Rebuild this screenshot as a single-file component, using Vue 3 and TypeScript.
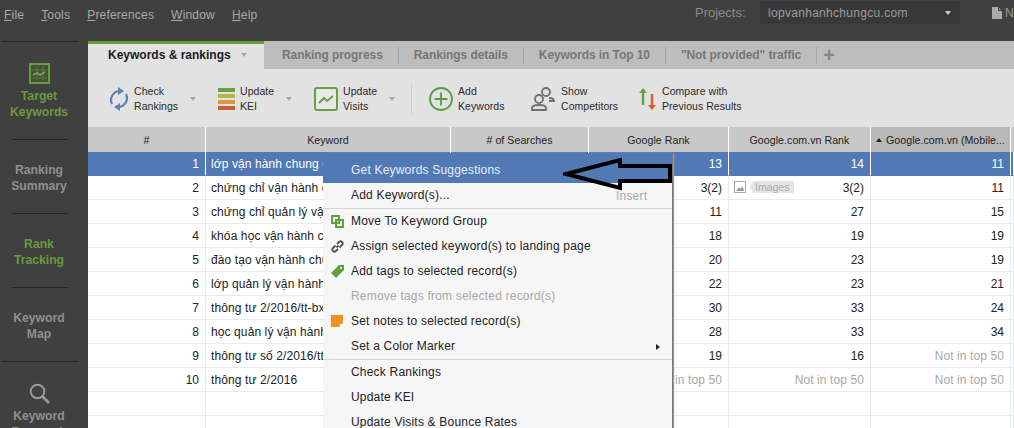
<script setup lang="ts">
interface Row { n: number; kw: string; g: string; v: string; m: string }
const na = 'Not in top 50'
const rows: Row[] = [
  { n: 1, kw: 'lớp vận hành chung cư', g: '13', v: '14', m: '11' },
  { n: 2, kw: 'chứng chỉ vận hành chung cư', g: '3(2)', v: '3(2)', m: '11' },
  { n: 3, kw: 'chứng chỉ quản lý vận hành chung cư', g: '11', v: '27', m: '15' },
  { n: 4, kw: 'khóa học vận hành chung cư', g: '18', v: '19', m: '19' },
  { n: 5, kw: 'đào tạo vận hành chung cư', g: '20', v: '23', m: '19' },
  { n: 6, kw: 'lớp quản lý vận hành chung cư', g: '22', v: '23', m: '21' },
  { n: 7, kw: 'thông tư 2/2016/tt-bxd', g: '30', v: '33', m: '24' },
  { n: 8, kw: 'học quản lý vận hành chung cư', g: '28', v: '33', m: '34' },
  { n: 9, kw: 'thông tư số 2/2016/tt-bxd', g: '19', v: '16', m: na },
  { n: 10, kw: 'thông tư 2/2016', g: na, v: na, m: na },
]
const menuA = ['Move To Keyword Group', 'Assign selected keyword(s) to landing page', 'Add tags to selected record(s)', 'Remove tags from selected record(s)', 'Set notes to selected record(s)', 'Set a Color Marker']
const menuB = ['Check Rankings', 'Update KEI', 'Update Visits & Bounce Rates']
const tabs = ['Ranking progress', 'Rankings details', 'Keywords in Top 10', '"Not provided" traffic']
</script>

<template>
  <div class="app">
    <header class="top">
      <nav class="menubar">
        <span><u>F</u>ile</span><span><u>T</u>ools</span><span><u>P</u>references</span><span><u>W</u>indow</span><span><u>H</u>elp</span>
      </nav>
      <div class="projects">
        <span class="plabel">Projects:</span>
        <div class="select"><span>lopvanhanhchungcu.com</span><i class="caret light"></i></div>
        <svg class="file" width="10" height="12" viewBox="0 0 10 12"><path d="M0 0h6l4 4v8H0z" fill="#aaa"/><path d="M6.500 0v3.500H10" fill="none" stroke="#404040"/></svg>
        <span class="new">New</span>
      </div>
    </header>
    <div class="body">
      <aside class="side">
        <div class="sline wide-line"></div>
        <div class="sitem first active">
          <svg width="21" height="21" viewBox="0 0 21 21" fill="none"><rect x="1" y="1" width="19" height="19" fill="#45503a" stroke="#6a9a3c" stroke-width="2"/><path d="M3 7h15M3 15h15M8 3v15M14 3v15" stroke="#6a9a3c" stroke-width=".8" opacity=".7"/><path d="M4 12l4-2 3 2 5-3" stroke="#7aa84a" stroke-width="1.600"/></svg>
          <span>Target<br>Keywords</span>
        </div>
        <div class="sline"></div>
        <div class="sitem"><span>Ranking<br>Summary</span></div>
        <div class="sline"></div>
        <div class="sitem active"><span>Rank<br>Tracking</span></div>
        <div class="sline"></div>
        <div class="sitem"><span>Keyword<br>Map</span></div>
        <div class="sline wide-line"></div>
        <div class="sitem first">
          <svg width="21" height="21" viewBox="0 0 21 21" fill="none"><circle cx="8.500" cy="8.500" r="6.800" stroke="#9a9a9a" stroke-width="2"/><path d="M13.500 13.500l6.500 6.500" stroke="#9a9a9a" stroke-width="2.600"/></svg>
          <span>Keyword<br>Research</span>
        </div>
      </aside>
      <main class="main">
        <div class="tabs">
          <div class="tab current">Keywords &amp; rankings<i class="caret"></i></div>
          <div v-for="t in tabs" :key="t" class="tab">{{ t }}</div>
          <div class="plus">+</div>
        </div>
        <div class="toolbar">
          <div class="tool t-check">
            <svg width="22" height="24" viewBox="0 0 22 24" fill="none"><path d="M4 17A9 9 0 0 1 11 4" stroke="#5c84b8" stroke-width="2.200"/><path d="M18 7a9 9 0 0 1-7 13" stroke="#5c84b8" stroke-width="2.200"/><path d="M10 0l6 4-6 4z" fill="#5c84b8"/><path d="M12 16l-6 4 6 4z" fill="#5c84b8"/></svg>
            <span>Check<br>Rankings</span><i class="caret"></i>
          </div>
          <div class="tool t-kei">
            <div class="kei"><b class="k1"></b><b class="k2"></b><b class="k3"></b><b class="k4"></b></div>
            <span>Update<br>KEI</span><i class="caret"></i>
          </div>
          <div class="tool t-visits">
            <svg width="24" height="24" viewBox="0 0 24 24" fill="none"><rect x="1" y="1" width="22" height="22" rx="2" stroke="#6a9f45" stroke-width="2" fill="#e8e8e8"/><path d="M5 16l5-5 3 3 6-5" stroke="#6a9f45" stroke-width="2"/></svg>
            <span>Update<br>Visits</span><i class="caret"></i>
          </div>
          <div class="vsep"></div>
          <div class="tool t-add">
            <svg width="24" height="24" viewBox="0 0 24 24" fill="none"><circle cx="12" cy="12" r="11" stroke="#5f9a42" stroke-width="1.800"/><path d="M12 5.500v13M5.500 12h13" stroke="#5f9a42" stroke-width="1.800"/></svg>
            <span>Add<br>Keywords</span>
          </div>
          <div class="tool t-show">
            <svg width="25" height="24" viewBox="0 0 25 24" fill="none" stroke="#707070" stroke-width="1.800"><circle cx="15" cy="5" r="4"/><circle cx="8" cy="12" r="4"/><path d="M18 11c3 0 5 1 5 3h-5M1 23v-2c0-2 3-3 7-3s7 1 7 3v2z"/></svg>
            <span>Show<br>Competitors</span>
          </div>
          <div class="tool t-cmp">
            <svg width="17" height="24" viewBox="0 0 17 24" fill="none"><path d="M4 18V3" stroke="#63a043" stroke-width="2.400"/><path d="M0 6l4-5 4 5z" fill="#63a043"/><path d="M13 7v13" stroke="#d2602f" stroke-width="2.400"/><path d="M9 18l4 5 4-5z" fill="#d2602f"/></svg>
            <span>Compare with<br>Previous Results</span>
          </div>
        </div>
        <div class="grid head">
          <div class="hc">#</div><div class="hc">Keyword</div><div class="hc"># of Searches</div><div class="hc">Google Rank</div><div class="hc">Google.com.vn Rank</div>
          <div class="hc sorted"><i class="up"></i>Google.com.vn (Mobile...</div><div class="hc end"></div>
        </div>
        <div v-for="r in rows" :key="r.n" class="grid row" :class="{ sel: r.n === 1 }">
          <div class="c num">{{ r.n }}</div>
          <div class="c kw">{{ r.kw }}</div>
          <div class="c"></div>
          <div class="c num" :class="{ na: r.g === na }">{{ r.g }}</div>
          <div class="c num vn" :class="{ na: r.v === na }">
            <span v-if="r.n === 2" class="img">
              <svg width="12" height="12" viewBox="0 0 12 12"><rect x=".5" y=".5" width="11" height="11" fill="#fff" stroke="#aaa"/><path d="M2 10l3-4 1.500 2 2-3 1.500 5z" fill="#999"/></svg>
              <em>Images</em>
            </span>
            {{ r.v }}
          </div>
          <div class="c num" :class="{ na: r.m === na }">{{ r.m }}</div>
          <div class="c"></div>
        </div>
        <div v-for="n in 2" :key="n" class="grid row">
          <div class="c"></div><div class="c"></div><div class="c"></div><div class="c"></div><div class="c"></div><div class="c"></div><div class="c"></div>
        </div>
      </main>
    </div>

    <div class="menu">
      <div class="mi hi">Get Keywords Suggestions</div>
      <div class="mi">Add Keyword(s)...<span class="short">Insert</span></div>
      <div class="msep"></div>
      <div v-for="(m, i) in menuA" :key="m" class="mi" :class="{ dis: i === 3 }">
        <svg v-if="i === 0" class="mic" width="13" height="13" viewBox="0 0 13 13" fill="none" stroke="#62a13c" stroke-width="2"><rect x="1" y="1" width="7" height="7"/><rect x="5" y="5" width="7" height="7"/></svg>
        <svg v-if="i === 1" class="mic" width="13" height="13" viewBox="0 0 13 13" fill="none" stroke="#555" stroke-width="1.800"><path d="M5.500 7.500l2-2M4.500 5.500L2 8a2 2 0 0 0 3 3l2-2M8.500 7.500L11 5a2 2 0 0 0-3-3L6 4"/></svg>
        <svg v-if="i === 2" class="mic" width="13" height="13" viewBox="0 0 13 13"><path d="M0 8l8-8h5v5l-8 8z" fill="#62a13c"/><circle cx="10" cy="3" r="1" fill="#f5f5f5"/></svg>
        <svg v-if="i === 4" class="mic" width="12" height="12" viewBox="0 0 12 12"><path d="M0 0h12v8l-4 4H0z" fill="#ee9322"/><path d="M9 9h3l-3 3z" fill="#fff"/></svg>
        {{ m }}
        <i v-if="i === 5" class="sub"></i>
      </div>
      <div class="msep"></div>
      <div v-for="m in menuB" :key="m" class="mi">{{ m }}</div>
    </div>

    <svg class="arrow" width="112" height="34" viewBox="0 0 112 34" fill="none"><path d="M3 17L57 3v6h50v15H57v7z" stroke="#000" stroke-width="4" stroke-linejoin="miter"/></svg>
  </div>
</template>

<style>
html, body { margin: 0; background: #404040; }
</style>

<style scoped>
.app { position: relative; width: 1014px; height: 428px; overflow: hidden; background: #404040; font: 12px "Liberation Sans", Arial, sans-serif; color: #222; }
.top { height: 41px; display: flex; justify-content: space-between; color: #a8a8a8; }
.menubar { display: flex; gap: 17px; padding: 8px 0 0 4px; letter-spacing: .2px; line-height: 14px; }
.projects { display: flex; align-items: flex-start; width: 319px; flex: none; color: #999; overflow: hidden; white-space: nowrap; }
.plabel { width: 65px; padding-top: 5px; color: #8a8a8a; font-size: 13px; flex: none; }
.select { width: 193px; height: 23px; margin-top: 1px; padding-left: 7px; background: #383838; display: flex; align-items: center; justify-content: space-between; flex: none; letter-spacing: .3px; color: #9c9c9c; }
.select span { margin-left: 1px; }
.select .caret { margin-right: 9px; }
.file { margin: 7px 3px 0 32px; flex: none; }
.new { padding-top: 6px; }
.body { display: flex; height: 387px; }
.side { width: 88px; flex: none; overflow: hidden; font-weight: bold; color: #8f8f8f; text-align: center; line-height: 16px; font-size: 12.200px; }
.sline { height: 1px; width: 56px; margin-left: 12px; background: #262626; }
.sline.wide-line { width: 76px; margin-left: 2px; }
.sitem { width: 78px; height: 73px; padding-top: 3px; box-sizing: border-box; display: flex; flex-direction: column; align-items: center; justify-content: center; white-space: nowrap; }
.sitem.first { height: 97px; padding-top: 21px; justify-content: flex-start; gap: 4px; }
.sitem.active { color: #6a9a3c; }
.main { flex: 1; min-width: 0; display: flex; flex-direction: column; background: #fff; overflow: hidden; }
.tabs { height: 28px; flex: none; background: #bdbdbd; display: flex; color: #777; font-weight: bold; line-height: 28px; }
.tab { position: relative; padding: 0 15px 0 16px; white-space: nowrap; letter-spacing: -.08px; }
.tab:not(.current):not(:nth-child(2))::before, .plus::before { content: ""; position: absolute; left: 0; top: 6px; height: 17px; width: 1px; background: #a5a5a5; }
.tab:nth-child(2) { padding-left: 18px; padding-right: 15px; }
.tab.current { width: 176px; box-sizing: border-box; padding: 0 0 0 20px; background: #e2e2e2; border-top: 3px solid #6a9a3c; color: #1c1c1c; line-height: 22px; letter-spacing: 0; }
.tab.current .caret { margin-left: 10px; vertical-align: 2px; border-top-color: #aaa; }
.plus { position: relative; padding-left: 7px; font-size: 20px; font-weight: bold; color: #888; line-height: 28px; }
.toolbar { height: 58px; flex: none; box-sizing: border-box; padding: 1px 0 0 20px; background: #e2e2e2; display: flex; align-items: center; line-height: 15px; font-size: 10.500px; letter-spacing: .05px; color: #2a2a2a; white-space: nowrap; }
.tool { display: flex; align-items: center; flex: none; }
.tool svg, .kei { flex: none; margin-right: 5px; }
.caret { display: inline-block; width: 0; height: 0; border: 3px solid transparent; border-top: 4px solid #aaa; border-bottom: 0; }
.caret.light { border-top-color: #ccc; }
.tool .caret { margin-left: auto; border-top-color: #aaa; }
.t-check { width: 110px; }
.t-check svg { margin-right: 4px; }
.t-kei { width: 96px; }
.t-visits { width: 81px; }
.t-kei .caret, .t-check .caret { margin-right: 22px; }
.t-visits .caret { margin-right: 0; }
.vsep { width: 1px; height: 32px; background: #cfcfcf; margin: 0 17px 0 16px; flex: none; }
.t-add { width: 102px; }
.t-show { width: 108px; }
.t-cmp svg { margin-right: 6px; }
.kei { width: 17px; display: flex; flex-direction: column; gap: 2px; }
.kei b { height: 4px; display: block; }
.k1 { background: #6a9f45; } .k2 { background: #b3b54a; } .k3 { background: #dd9a3c; } .k4 { background: #c4623a; }
.grid { display: grid; grid-template-columns: 118px 245px 138px 140px 142px 140px 3px; }
.head { height: 25px; line-height: 27px; text-align: center; color: #222; flex: none; font-size: 10.600px; letter-spacing: .05px; }
.hc { background: #c8c8c8; border-right: 1px solid #fff; white-space: nowrap; overflow: hidden; }
.hc.end { border: 0; }
.hc.sorted { background: #b8b8b8; }
.up { display: inline-block; width: 0; height: 0; border: 3px solid transparent; border-bottom: 4px solid #222; border-top: 0; margin-right: 4px; vertical-align: 2px; }
.row { height: 24px; line-height: 25px; flex: none; color: #222; }
.sel { line-height: 24px; }
.c { border-right: 1px solid #e6ebee; border-bottom: 1px solid #e6ebee; white-space: nowrap; overflow: hidden; padding: 0 6px; box-sizing: border-box; }
.c:last-child { padding: 0; }
.num { text-align: right; }
.kw { padding-left: 5px; letter-spacing: .1px; }
.na { color: #a8a8a8; letter-spacing: .1px; }
.vn { position: relative; }
.img { position: absolute; left: 5px; top: 5px; display: flex; gap: 4px; align-items: center; height: 12px; font-size: 10.500px; color: #aaa; }
.img em { font-style: normal; background: #e5e5e5; padding: 0 5px 0 5px; line-height: 12px; clip-path: polygon(3px 0, 100% 0, 100% 100%, 3px 100%, 0 50%); }
.sel { color: #fff; }
.sel .c { background: #5079b5; border-right-color: #fff; border-bottom-color: #5079b5; }
.menu { position: absolute; left: 323px; top: 153px; width: 349px; background: #f6f6f6; border-right: 1px solid #777; box-shadow: 1px 0 1px #999; color: #222; letter-spacing: .2px; }
.mi { position: relative; height: 25px; line-height: 25px; padding-left: 28px; white-space: nowrap; }
.mi.hi { height: 30px; line-height: 34px; background: #5079b5; color: #e8eef8; }
.dis { color: #a8a8a8; }
.short { position: absolute; left: 293px; top: 1px; color: #a8a8a8; }
.msep { height: 1px; background: #d4d4d4; }
.mic { position: absolute; left: 8px; top: 6px; }
.sub { position: absolute; left: 333px; top: 10px; width: 0; height: 0; border: 3px solid transparent; border-left: 4px solid #222; border-right: 0; }
.arrow { position: absolute; left: 563px; top: 157px; }
</style>
